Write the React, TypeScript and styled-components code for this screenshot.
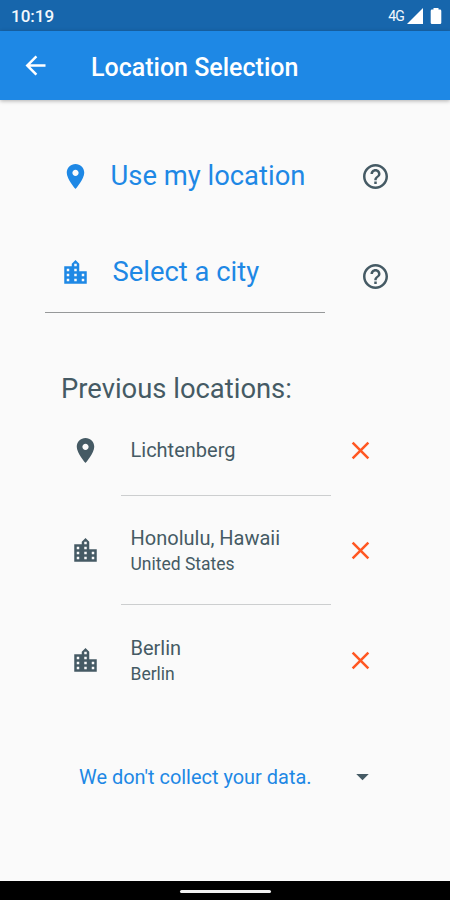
import React from 'react';
import styled, { createGlobalStyle } from 'styled-components';

const GlobalStyle = createGlobalStyle`
  * { box-sizing: border-box; }
  body { margin: 0; background: #fafafa; }
`;

const SLATE = '#455a64';
const BLUE = '#1e88e5';

const Screen = styled.div`
  display: flex;
  flex-direction: column;
  width: 450px;
  height: 900px;
  overflow: hidden;
  background: #fafafa;
  color: ${SLATE};
  font-family: Roboto, 'Liberation Sans', sans-serif;
`;

const StatusBar = styled.header`
  display: flex;
  align-items: center;
  flex: none;
  height: 31px;
  padding: 1px 8px 0 11px;
  background: #1766ac;
  color: #f3f8fd;
`;

const Clock = styled.span`
  flex: 1;
  font-size: 17px;
  font-weight: 500;
  line-height: 28px;
`;

const Network = styled.span`
  font-size: 14px;
  line-height: 28px;
  letter-spacing: -0.8px;
  margin-right: 2px;
`;

const StatusIcons = styled.svg`
  display: block;
  width: 36px;
  height: 18px;
`;

const AppBar = styled.nav`
  display: flex;
  align-items: center;
  flex: none;
  height: 69px;
  padding: 0 0 0 20px;
  background: ${BLUE};
  color: #fff;
  box-shadow: 0 1px 4px rgba(0, 0, 0, 0.3);
`;

const Title = styled.h1`
  margin: 5px 0 0 40px;
  font-size: 25px;
  font-weight: 500;
  line-height: 32px;
  white-space: nowrap;
`;

const Content = styled.main`
  display: flex;
  flex-direction: column;
  flex: 1;
  min-height: 0;
`;

const Glyph = styled.svg<{ $tone?: string }>`
  display: block;
  flex: none;
  width: 31px;
  height: 31px;
  fill: ${(p) => p.$tone ?? 'currentColor'};
`;

const Option = styled.div<{ $height: number; $helpDrop?: number }>`
  display: grid;
  grid-template-columns: 300px 31px;
  align-items: center;
  height: ${(p) => p.$height}px;
  margin-top: 61px;
  padding-left: 60px;

  & > svg {
    margin-top: ${(p) => p.$helpDrop ?? 0}px;
  }
`;

const OptionButton = styled.button<{ $gap: number }>`
  display: flex;
  align-items: center;
  gap: ${(p) => p.$gap}px;
  height: 31px;
  padding: 0;
  border: 0;
  background: none;
  color: ${BLUE};
  font: inherit;
  text-align: left;
`;

const OptionLabel = styled.span`
  font-size: 27.4px;
  line-height: 31px;
  white-space: nowrap;
`;

const Rule = styled.hr`
  flex: none;
  width: 280px;
  height: 1px;
  margin: 20px 0 0 45px;
  border: 0;
  background: #969899;
`;

const Heading = styled.h2`
  margin: 60px 0 0 61px;
  font-size: 27.4px;
  font-weight: 400;
  line-height: 32px;
  white-space: nowrap;
`;

const List = styled.ul`
  margin: 0;
  padding: 0;
  list-style: none;
`;

const Place = styled.li<{ $height: number }>`
  display: grid;
  grid-template-columns: 51px 210px 46px;
  align-items: center;
  height: ${(p) => p.$height}px;
  margin-left: 70px;

  & > svg:last-child {
    margin-left: 14px;
  }
`;

const PlaceText = styled.div<{ $lined: boolean; $top: number }>`
  display: flex;
  flex-direction: column;
  justify-content: center;
  height: 100%;
  padding: ${(p) => p.$top}px 0 0 9.5px;
  border-bottom: ${(p) => (p.$lined ? '1px solid #cccecf' : '0')};
`;

const PlaceName = styled.span`
  font-size: 20px;
  line-height: 26px;
`;

const PlaceRegion = styled.span`
  font-size: 17.5px;
  line-height: 26px;
`;

const Privacy = styled.button`
  display: flex;
  align-items: center;
  justify-content: space-between;
  width: 299px;
  height: 31px;
  margin: 45px 0 0 79px;
  padding: 0;
  border: 0;
  background: none;
  color: ${BLUE};
  font: inherit;
  font-size: 19.95px;
  white-space: nowrap;
`;

const NavigationBar = styled.footer`
  display: flex;
  justify-content: center;
  align-items: center;
  flex: none;
  height: 19px;
  padding-top: 2px;
  background: #000;
`;

const HomeHandle = styled.div`
  width: 91px;
  height: 3px;
  border-radius: 2px;
  background: #f2f2f2;
`;

const paths = {
  back: 'M20 11H7.83l5.59-5.59L12 4l-8 8 8 8 1.41-1.41L7.83 13H20v-2z',
  pin: 'M12 2C8.13 2 5 5.13 5 9c0 5.25 7 13 7 13s7-7.75 7-13c0-3.87-3.13-7-7-7zm0 9.5c-1.38 0-2.5-1.12-2.5-2.5s1.12-2.5 2.5-2.5 2.5 1.12 2.5 2.5-1.12 2.5-2.5 2.5z',
  city: 'M15 11V5l-3-3-3 3v2H3v14h18V11h-6zm-8 8H5v-2h2v2zm0-4H5v-2h2v2zm0-4H5V9h2v2zm6 8h-2v-2h2v2zm0-4h-2v-2h2v2zm0-4h-2V9h2v2zm0-4h-2V5h2v2zm6 12h-2v-2h2v2zm0-4h-2v-2h2v2z',
  help: 'M11 18h2v-2h-2v2zm1-16C6.48 2 2 6.48 2 12s4.48 10 10 10 10-4.48 10-10S17.52 2 12 2zm0 18c-4.41 0-8-3.59-8-8s3.59-8 8-8 8 3.59 8 8-3.59 8-8 8zm0-14c-2.21 0-4 1.79-4 4h2c0-1.1.9-2 2-2s2 .9 2 2c0 2-3 1.75-3 5h2c0-2.25 3-2.5 3-5 0-2.21-1.79-4-4-4z',
  close: 'M19 6.41L17.59 5 12 10.59 6.41 5 5 6.41 10.59 12 5 17.59 6.41 19 12 13.41 17.59 19 19 17.59 13.41 12z',
  dropdown: 'M7 10l5 5 5-5z',
};

type IconProps = { name: keyof typeof paths; tone?: string };

const Icon = ({ name, tone }: IconProps) => (
  <Glyph viewBox="-0.4 -0.4 24.8 24.8" $tone={tone} aria-hidden="true">
    <path d={paths[name]} />
  </Glyph>
);

const places: { name: string; region?: string; icon: 'pin' | 'city'; height: number }[] = [
  { name: 'Lichtenberg', icon: 'pin', height: 91 },
  { name: 'Honolulu, Hawaii', region: 'United States', icon: 'city', height: 109 },
  { name: 'Berlin', region: 'Berlin', icon: 'city', height: 111 },
];

export default function App() {
  return (
    <>
      <GlobalStyle />
      <Screen>
        <StatusBar>
          <Clock>10:19</Clock>
          <Network>4G</Network>
          <StatusIcons viewBox="0 0 36 18" fill="#fff" aria-hidden="true">
            <path d="M1 17H17V1z" />
            <path d="M27.5 1h5v1.6H34q1.3 0 1.3 1.3v11.8q0 1.3-1.3 1.3h-8q-1.3 0-1.3-1.3V3.9q0-1.3 1.3-1.3h1.5z" />
          </StatusIcons>
        </StatusBar>
        <AppBar>
          <Icon name="back" />
          <Title>Location Selection</Title>
        </AppBar>
        <Content>
          <Option $height={31}>
            <OptionButton $gap={19.5}>
              <Icon name="pin" />
              <OptionLabel>Use my location</OptionLabel>
            </OptionButton>
            <Icon name="help" tone={SLATE} />
          </Option>
          <Option $height={39} $helpDrop={8}>
            <OptionButton $gap={21.5}>
              <Icon name="city" />
              <OptionLabel>Select a city</OptionLabel>
            </OptionButton>
            <Icon name="help" tone={SLATE} />
          </Option>
          <Rule />
          <Heading>Previous locations:</Heading>
          <List>
            {places.map((place, i) => (
              <Place key={place.name} $height={place.height}>
                <Icon name={place.icon} />
                <PlaceText $lined={i < places.length - 1} $top={place.region ? 1 : 0}>
                  <PlaceName>{place.name}</PlaceName>
                  {place.region && <PlaceRegion>{place.region}</PlaceRegion>}
                </PlaceText>
                <Icon name="close" tone="#ff5722" />
              </Place>
            ))}
          </List>
          <Privacy>
            <span>We don't collect your data.</span>
            <Icon name="dropdown" tone={SLATE} />
          </Privacy>
        </Content>
        <NavigationBar>
          <HomeHandle />
        </NavigationBar>
      </Screen>
    </>
  );
}
